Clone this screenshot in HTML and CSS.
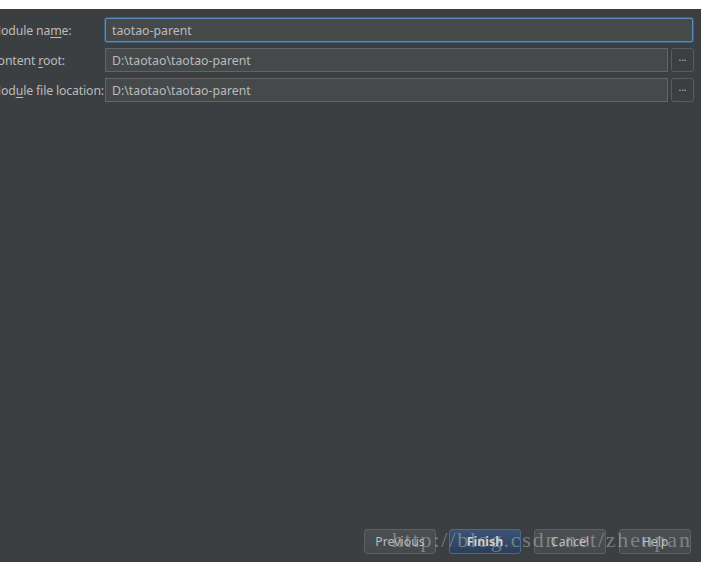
FILE: index.html
```html
<!DOCTYPE html>
<html lang="en">
<head>
    <meta charset="UTF-8">
    <title>New Module</title>
    <link rel="stylesheet" href="styles.css">
</head>
<body>

<div class="topStrip"></div>

<div id="dialog">
    <div id="form">
        <label class="fieldLabel">Module na<u>m</u>e:</label>
        <input class="textField focused wide" type="text" value="taotao-parent">

        <label class="fieldLabel">Content <u>r</u>oot:</label>
        <input class="textField" type="text" value="D:\taotao\taotao-parent">
        <button class="browseBtn">...</button>

        <label class="fieldLabel">Mod<u>u</u>le file location:</label>
        <input class="textField" type="text" value="D:\taotao\taotao-parent">
        <button class="browseBtn">...</button>
    </div>

    <div id="footer">
        <button class="dlgBtn">Previous</button>
        <button class="dlgBtn primary">Finish</button>
        <button class="dlgBtn">Cancel</button>
        <button class="dlgBtn">Help</button>
        <span class="watermark">http://blog.csdn.net/zhenpan</span>
    </div>
</div>

</body>
</html>
```

FILE: styles.css
```css
html, body {
    margin: 0;
    padding: 0;
    width: 701px;
    height: 562px;
    overflow: hidden;
    background-color: #3c3f41;
    font-family: "Segoe UI", "Noto Sans", sans-serif;
    font-size: 12.3px;
    color: #bbbbbb;
}

.topStrip {
    height: 9px;
    background-color: #ffffff;
}

#dialog {
    display: flex;
    flex-direction: column;
    height: 553px;
}

#form {
    flex: 1;
    display: grid;
    grid-template-columns: 112px 1fr 23px;
    grid-auto-rows: 24px;
    column-gap: 3px;
    row-gap: 6px;
    align-content: start;
    align-items: center;
    margin-left: -10px;
    padding-top: 9px;
    padding-right: 7px;
}

.fieldLabel {
    white-space: nowrap;
    letter-spacing: -0.15px;
    margin-right: -3px;
}

.fieldLabel u {
    text-underline-offset: 2px;
}

.textField {
    box-sizing: border-box;
    height: 24px;
    width: 100%;
    margin: 0;
    padding: 0 6px;
    border: 1px solid #646464;
    background-color: #45494a;
    color: #bbbbbb;
    font-family: inherit;
    font-size: 12.3px;
    outline: none;
}

.textField.wide {
    grid-column: 2 / 4;
    width: calc(100% - 1px);
}

.textField.focused {
    border: 1px solid #5b8cbd;
    border-radius: 2px;
    box-shadow: 0 0 0 1px #395f85;
}

.browseBtn {
    box-sizing: border-box;
    height: 24px;
    width: 23px;
    margin: 0;
    padding: 0 0 6px 0;
    border: 1px solid #5a5d5f;
    border-radius: 3px;
    background-color: #3c3f41;
    color: #bbbbbb;
    font-family: inherit;
    font-size: 10px;
    letter-spacing: 0;
}

#footer {
    position: relative;
    display: flex;
    justify-content: flex-end;
    gap: 13px;
    height: 25px;
    padding-right: 10px;
    margin-bottom: 8px;
}

.dlgBtn {
    box-sizing: border-box;
    width: 72px;
    height: 25px;
    margin: 0;
    padding: 0;
    border: 1px solid #5e6162;
    border-radius: 3px;
    background: linear-gradient(#4b4f51, #45494b);
    color: #bbbbbb;
    font-family: inherit;
    font-size: 12.3px;
}

.dlgBtn.primary {
    border-color: #4a6a8c;
    background: linear-gradient(#3a5475, #2b3e58);
    color: #d0d0d0;
    font-weight: bold;
}

.watermark {
    position: absolute;
    left: 392px;
    top: -2px;
    font-family: "Liberation Serif", serif;
    font-size: 22px;
    letter-spacing: 1.8px;
    color: rgba(200, 200, 200, 0.45);
    white-space: nowrap;
    pointer-events: none;
}
```
